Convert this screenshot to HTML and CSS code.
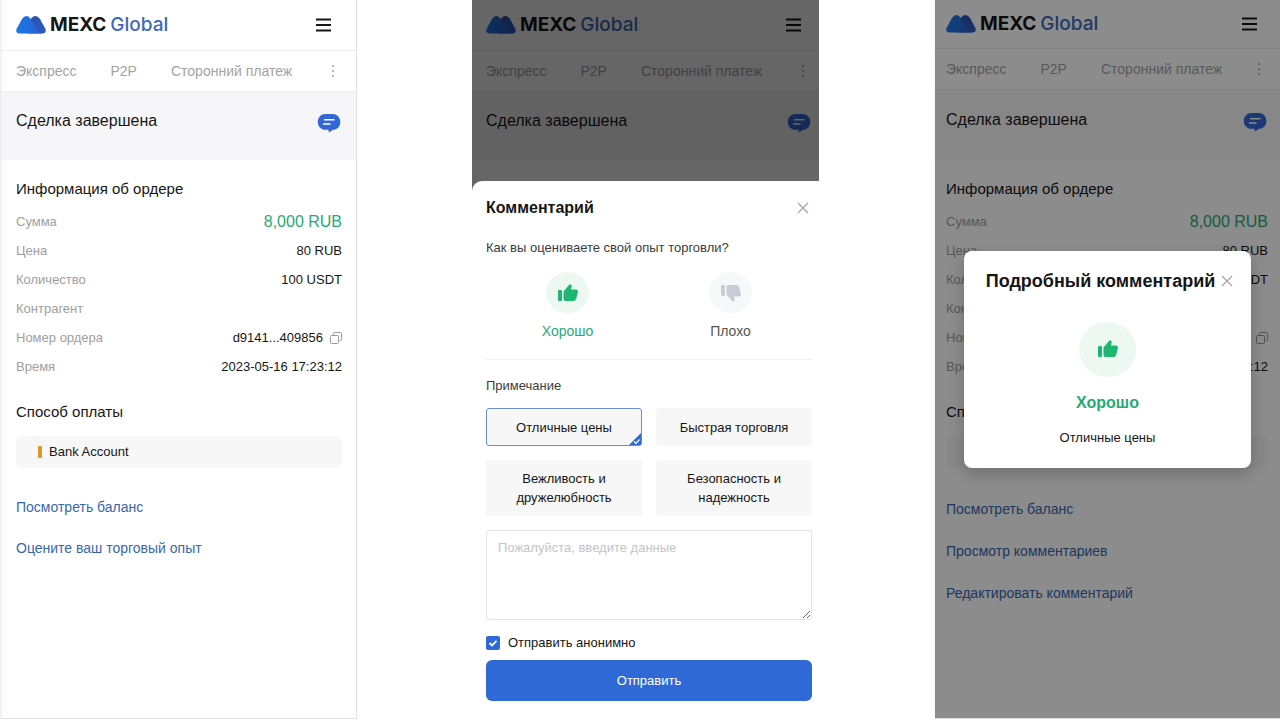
FILE: index.html
```
<!DOCTYPE html>
<html lang="ru">
<head>
    <meta charset="UTF-8">
    <meta name="viewport" content="width=device-width, initial-scale=1.0">
    <title>MEXC Global P2P</title>
    <link rel="stylesheet" href="styles.css">
</head>
<body>
    <!-- shared icons -->
    <svg class="sprite" aria-hidden="true">
        <defs>
            <linearGradient id="logoLeft" x1="0" y1="0" x2="1" y2="0">
                <stop offset="0" stop-color="#1a78e6"/>
                <stop offset="1" stop-color="#2a5fd0"/>
            </linearGradient>
            <linearGradient id="logoRight" x1="0" y1="0" x2="1" y2="1">
                <stop offset="0" stop-color="#2f50a8"/>
                <stop offset="1" stop-color="#2b5cc4"/>
            </linearGradient>
            <symbol id="logo" viewBox="0 0 30 18">
                <path fill="url(#logoRight)" d="M12 7 15.500 2Q17 0 19.500 0 22 0 24 3L29.500 13Q30.800 17 26.500 17.600H12Z"/>
                <path fill="url(#logoLeft)" d="M3.500 17.600Q-.8 17 .5 13L6 3Q8 0 10.500 0 12.500 0 14 2L21.500 14Q23.500 17 26.500 17.600Z"/>
            </symbol>
            <symbol id="chat" viewBox="0 0 24 20">
                <path fill="#3467d6" d="M8.500 1H15.500C20 1 23.300 4.300 23.300 9S20 16.800 16 16.800L12 19.600 11.300 16.800H8.500C4 16.800.8 13.500.8 9S4 1 8.500 1Z"/>
                <path d="M7 6.800h10.500M6 11h7.500" stroke="#fff" stroke-width="1.600"/>
            </symbol>
            <symbol id="thumb" viewBox="0 0 20 18">
                <rect x="0" y="6" width="4" height="11" rx="1"/>
                <path d="M5.500 7.500 11 1Q12.300-.4 13.400 1 14 1.800 13.500 3.200L12.800 5.500H18Q20.300 5.600 20 7.800L18.300 14.500Q17.600 17 15.400 17H7.500Q5.500 17 5.500 15Z"/>
            </symbol>
            <symbol id="copy" viewBox="0 0 12 12">
                <path d="M3.500 3V1.500Q3.500.5 4.500.5H10.500Q11.500.5 11.500 1.500V7.500Q11.500 8.500 10.500 8.500H9.500M1.500 3.500H7.500Q8.500 3.500 8.500 4.500V10.500Q8.500 11.500 7.500 11.500H1.500Q.5 11.500.5 10.500V4.500Q.5 3.500 1.500 3.500Z" fill="none" stroke="#9a9a9a"/>
            </symbol>
            <symbol id="close" viewBox="0 0 12 12">
                <path d="M1 1 11 11M11 1 1 11" stroke="#a4a4a4" stroke-width="1.200"/>
            </symbol>
            <symbol id="menu" viewBox="0 0 16 14">
                <path d="M0 1.500H15M0 7H15M0 12.500H15" stroke="#161616" stroke-width="2"/>
            </symbol>
        </defs>
    </svg>

    <main class="screens">
        <!-- completed order -->
        <section class="screen screen-order">
            <header class="header">
                <a class="brand" href="#"><svg class="brand-logo"><use href="#logo"/></svg><b>MEXC</b> <span>Global</span></a>
                <button class="menu-btn" aria-label="Меню"><svg><use href="#menu"/></svg></button>
            </header>
            <nav class="tabs">
                <a href="#">Экспресс</a>
                <a href="#">P2P</a>
                <a href="#">Сторонний платеж</a>
                <button class="more-btn" aria-label="Ещё"><i></i><i></i><i></i></button>
            </nav>
            <div class="status">
                <h1>Сделка завершена</h1>
                <button class="chat-btn" aria-label="Чат"><svg><use href="#chat"/></svg></button>
            </div>
            <div class="content">
                <h2>Информация об ордере</h2>
                <dl class="info">
                    <div><dt>Сумма</dt><dd class="amount">8,000 RUB</dd></div>
                    <div><dt>Цена</dt><dd>80 RUB</dd></div>
                    <div><dt>Количество</dt><dd>100 USDT</dd></div>
                    <div><dt>Контрагент</dt><dd></dd></div>
                    <div><dt>Номер ордера</dt><dd>d9141...409856 <button class="copy-btn" aria-label="Копировать"><svg><use href="#copy"/></svg></button></dd></div>
                    <div><dt>Время</dt><dd>2023-05-16 17:23:12</dd></div>
                </dl>
                <h2>Способ оплаты</h2>
                <div class="payment">Bank Account</div>
                <div class="links">
                    <a href="#">Посмотреть баланс</a>
                    <a href="#">Оцените ваш торговый опыт</a>
                </div>
            </div>
        </section>

        <!-- comment form -->
        <section class="screen screen-comment">
            <header class="header">
                <a class="brand" href="#"><svg class="brand-logo"><use href="#logo"/></svg><b>MEXC</b> <span>Global</span></a>
                <button class="menu-btn" aria-label="Меню"><svg><use href="#menu"/></svg></button>
            </header>
            <nav class="tabs">
                <a href="#">Экспресс</a>
                <a href="#">P2P</a>
                <a href="#">Сторонний платеж</a>
                <button class="more-btn" aria-label="Ещё"><i></i><i></i><i></i></button>
            </nav>
            <div class="status">
                <h1>Сделка завершена</h1>
                <button class="chat-btn" aria-label="Чат"><svg><use href="#chat"/></svg></button>
            </div>
            <div class="overlay">
                <form class="sheet">
                    <div class="sheet-head">
                        <h2>Комментарий</h2>
                        <button type="button" class="close-btn" aria-label="Закрыть"><svg><use href="#close"/></svg></button>
                    </div>
                    <p class="question">Как вы оцениваете свой опыт торговли?</p>
                    <div class="rating">
                        <label class="rate">
                            <input type="radio" name="rate" checked>
                            <span class="rate-icon"><svg><use href="#thumb"/></svg></span>
                            Хорошо
                        </label>
                        <label class="rate rate-bad">
                            <input type="radio" name="rate">
                            <span class="rate-icon"><svg><use href="#thumb"/></svg></span>
                            Плохо
                        </label>
                    </div>
                    <p class="note">Примечание</p>
                    <div class="chips">
                        <label class="chip"><input type="checkbox" checked>Отличные цены<svg class="chip-mark" viewBox="0 0 12 12"><path d="M12 0V12H0Z" fill="#2f69d6"/><path d="M5 8.500 7 10.300 10.500 6.500" fill="none" stroke="#fff" stroke-width="1.200"/></svg></label>
                        <label class="chip"><input type="checkbox">Быстрая торговля</label>
                        <label class="chip"><input type="checkbox">Вежливость и дружелюбность</label>
                        <label class="chip"><input type="checkbox">Безопасность и надежность</label>
                    </div>
                    <textarea aria-label="Комментарий" placeholder="Пожалуйста, введите данные"></textarea>
                    <label class="anonymous">
                        <input type="checkbox" checked>
                        <svg viewBox="0 0 14 14"><rect width="14" height="14" rx="2" fill="#2f69d6"/><path d="M3.500 7 6 9.500 10.500 4.800" fill="none" stroke="#fff" stroke-width="1.800"/></svg>
                        Отправить анонимно
                    </label>
                    <button type="button" class="submit">Отправить</button>
                </form>
            </div>
        </section>

        <!-- comment details -->
        <section class="screen screen-details">
            <header class="header">
                <a class="brand" href="#"><svg class="brand-logo"><use href="#logo"/></svg><b>MEXC</b> <span>Global</span></a>
                <button class="menu-btn" aria-label="Меню"><svg><use href="#menu"/></svg></button>
            </header>
            <nav class="tabs">
                <a href="#">Экспресс</a>
                <a href="#">P2P</a>
                <a href="#">Сторонний платеж</a>
                <button class="more-btn" aria-label="Ещё"><i></i><i></i><i></i></button>
            </nav>
            <div class="status">
                <h1>Сделка завершена</h1>
                <button class="chat-btn" aria-label="Чат"><svg><use href="#chat"/></svg></button>
            </div>
            <div class="content">
                <h2>Информация об ордере</h2>
                <dl class="info">
                    <div><dt>Сумма</dt><dd class="amount">8,000 RUB</dd></div>
                    <div><dt>Цена</dt><dd>80 RUB</dd></div>
                    <div><dt>Количество</dt><dd>100 USDT</dd></div>
                    <div><dt>Контрагент</dt><dd></dd></div>
                    <div><dt>Номер ордера</dt><dd><button class="copy-btn" aria-label="Копировать"><svg><use href="#copy"/></svg></button></dd></div>
                    <div><dt>Время</dt><dd>2023-05-16 17:23:12</dd></div>
                </dl>
                <h2>Способ оплаты</h2>
                <div class="payment"></div>
                <div class="links">
                    <a href="#">Посмотреть баланс</a>
                    <a href="#">Просмотр комментариев</a>
                    <a href="#">Редактировать комментарий</a>
                </div>
            </div>
            <div class="overlay">
                <div class="dialog" role="dialog" aria-labelledby="dialogTitle">
                    <div class="dialog-head">
                        <h2 id="dialogTitle">Подробный комментарий</h2>
                        <button class="close-btn" aria-label="Закрыть"><svg><use href="#close"/></svg></button>
                    </div>
                    <span class="rate-icon rate-icon-big"><svg><use href="#thumb"/></svg></span>
                    <strong>Хорошо</strong>
                    <p>Отличные цены</p>
                </div>
            </div>
        </section>
    </main>
</body>
</html>
```
FILE: styles.css
```
* { box-sizing: border-box; }
body { margin: 0; background: #fff; color: #161616; font-family: "Liberation Sans", Arial, sans-serif; font-size: 13px; line-height: 20px; }
h1, h2, p, dl, dd { margin: 0; font-weight: normal; }
a { color: inherit; text-decoration: none; }
button { padding: 0; border: none; background: none; font: inherit; color: inherit; cursor: pointer; }
svg { display: block; }
.sprite { position: absolute; width: 0; height: 0; }

.screens { display: grid; grid-template-columns: 357fr 347fr 346fr; column-gap: 115px; min-height: 100vh; padding-bottom: 1px; }
.screen { --left: 14px; --right: 14px; position: relative; overflow: hidden; border-bottom: 1px solid #e2e2e2; }
.screen-order { border-left: 2px solid #f1f1f1; border-right: 1px solid #e2e2e2; }
.screen-comment { --right: 7px; border-bottom: none; }
.screen-details { --left: 11px; --right: 12px; border-left: 1px solid #f8f8f8; }

.header { display: flex; justify-content: space-between; align-items: center; height: 51px; padding: 0 var(--right) 0 var(--left); border-bottom: 1px solid #ececec; }
.brand { display: flex; align-items: center; gap: 4px; font-family: Inter, "Liberation Sans", sans-serif; font-size: 19px; }
.brand b { font-weight: 700; }
.brand span { color: #3c68bd; font-weight: 500; }
.brand-logo { width: 30px; height: 18px; }
.menu-btn { margin-right: 10px; }
.menu-btn svg { width: 16px; height: 14px; }

.tabs { display: flex; align-items: center; gap: 34px; height: 41px; padding: 0 var(--right) 0 var(--left); border-bottom: 1px solid #eee; color: #a3a3a3; font-size: 14px; }
.more-btn { display: grid; gap: 3px; margin: 0 8px 0 auto; }
.more-btn i { width: 2px; height: 2px; background: #b5b5b5; }

.status { display: flex; justify-content: space-between; align-items: flex-start; height: 68px; padding: 19px var(--right) 0 var(--left); background: #f6f6f8; }
.status h1 { font-size: 16px; }
.chat-btn { margin: 2px 1px 0 0; }
.chat-btn svg { width: 24px; height: 20px; }

.content { padding: 19px var(--right) 0 var(--left); }
.content h2 { font-size: 15px; }
.info { margin: 8px 0 21px; }
.info div { display: flex; justify-content: space-between; align-items: center; height: 29px; }
.info dt { color: #a0a0a0; }
.info dd { display: flex; align-items: center; gap: 7px; }
.info .amount { color: #26a976; font-size: 16px; }
.copy-btn svg { width: 12px; height: 12px; }
.payment { display: flex; align-items: center; gap: 7px; height: 32px; margin-top: 14px; padding-left: 22px; border-radius: 6px; background: #f7f7f8; }
.payment:not(:empty)::before { content: ""; width: 4px; height: 12px; border-radius: 1px; background: #d99a2b; }
.links { display: flex; flex-direction: column; align-items: flex-start; gap: 21px; margin-top: 29px; color: #3767b0; font-size: 14px; }

.screen-details .header { height: 49px; }
.screen-details .status { height: 70px; padding-top: 20px; }
.screen-details .links { gap: 22px; margin-top: 31px; }

.overlay { position: absolute; inset: 0; display: flex; }
.screen-comment .overlay { align-items: flex-end; background: rgba(0, 0, 0, 0.6); }
.screen-details .overlay { align-items: center; justify-content: center; background: rgba(0, 0, 0, 0.45); }
.close-btn svg { width: 12px; height: 12px; }

.rate-icon { display: flex; align-items: center; justify-content: center; width: 43px; height: 41px; border-radius: 50%; background: #edf8f3; }
.rate-icon svg { width: 20px; height: 18px; fill: #1fb573; }
.rate-icon-big { width: 57px; height: 55px; }

.sheet { width: 100%; padding: 17px var(--right) 18px var(--left); border-radius: 10px 0 0 0; background: #fff; }
.sheet input { position: absolute; opacity: 0; }
.sheet-head { display: flex; justify-content: space-between; align-items: center; padding-right: 3px; }
.sheet-head h2 { font-size: 16px; font-weight: bold; }
.question { margin-top: 20px; color: #3c3c3c; }
.rating { display: grid; grid-template-columns: 1fr 1fr; margin-top: 14px; padding-bottom: 18px; border-bottom: 1px solid #efefef; }
.rate { display: flex; flex-direction: column; align-items: center; gap: 8px; color: #26a976; font-size: 14px; }
.rate-bad { color: #555; }
.rate-bad .rate-icon { background: #f7f8fa; }
.rate-bad svg { fill: #c9cdd3; transform: scaleY(-1); }
.note { margin-top: 16px; color: #3c3c3c; }
.chips { display: grid; grid-template-columns: 1fr 1fr; gap: 14px; margin: 12px 0 14px; }
.chip { position: relative; display: flex; align-items: center; justify-content: center; min-height: 38px; padding: 9px 20px; border-radius: 3px; background: #f7f7f7; text-align: center; line-height: 19px; }
.chip:has(:checked) { border: 1px solid #6a8fce; padding: 8px 19px; }
.chip-mark { position: absolute; right: 0; bottom: 0; width: 12px; height: 12px; }
textarea { display: block; width: 100%; height: 90px; padding: 7px 11px; border: 1px solid #e3e3e3; border-radius: 3px; font: inherit; }
textarea::placeholder { color: #c4c4c4; }
.anonymous { display: flex; align-items: center; gap: 8px; margin-top: 13px; }
.anonymous svg { width: 14px; height: 14px; }
.submit { display: block; width: 100%; height: 41px; margin-top: 7px; border-radius: 6px; background: #2f69d6; color: #fff; }

.dialog { display: flex; flex-direction: column; align-items: center; width: 287px; padding: 20px 18px; border-radius: 8px; background: #fff; box-shadow: 0 6px 16px rgba(0, 0, 0, 0.2); }
.dialog-head { display: flex; align-items: center; gap: 6px; margin-bottom: 31px; padding-left: 4px; }
.dialog h2 { font-size: 18px; font-weight: bold; white-space: nowrap; }
.dialog strong { margin: 16px 0 15px; color: #26a976; font-size: 16px; }
```
